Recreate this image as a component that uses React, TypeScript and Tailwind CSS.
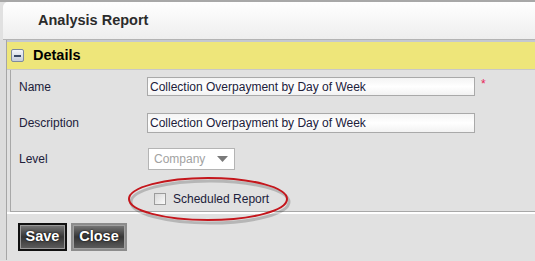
export default function App() {
  const font = { fontFamily: '"Liberation Sans", Arial, sans-serif' };
  return (
    <div
      className="relative w-[535px] h-[261px] overflow-hidden bg-[#e1e1e1] border-t-2 border-[#a8a8a8]"
      style={font}
    >
      {/* Window header */}
      <div className="ml-[3px] h-[38px] rounded-tl-[5px] bg-gradient-to-b from-white to-[#eeeeee] border-b border-[#b4b4b4] flex items-center pl-[35px]">
        <span className="text-[14.5px] font-bold text-[#2b2b2b]">Analysis Report</span>
      </div>

      {/* Body */}
      <div className="flex h-[220px]">
        <div className="w-[7px] bg-[#dcdcdc] border-r border-[#a6a6a6]" />
        <div className="flex-1 flex flex-col border-t-2 border-[#c4c8d0]">
          {/* Section bar */}
          <div className="h-[28px] bg-[#eee67a] border-b border-[#c8c8c8] flex items-center pl-[4px]">
            <div className="w-[13px] h-[13px] rounded-[2px] border border-[#7d8aa0] bg-gradient-to-b from-[#f4f6fa] to-[#c6cedb] flex items-center justify-center">
              <div className="w-[7px] h-[2px] bg-[#3a4a66]" />
            </div>
            <span className="ml-[9px] text-[14.5px] font-bold text-black">Details</span>
          </div>

          {/* Form */}
          <div className="flex">
            <div className="w-[3px]" />
            <div className="flex-1 h-[142px] border-l border-b border-[#a8a8a8] pl-[8px] pt-[7px] text-[12px] text-[#20203a]">
              <div className="flex items-center h-[19px]">
                <span className="w-[128px]">Name</span>
                <div className="w-[328px] h-[19px] border border-[#a9a9a9] bg-gradient-to-b from-[#f4f4f4] via-white to-[#f2f2f2] flex items-center pl-[2px]">
                  Collection Overpayment by Day of Week
                </div>
                <span className="ml-[6px] -mt-[6px] text-[#e8245a] text-[12px]">*</span>
              </div>
              <div className="flex items-center h-[20px] mt-[17px]">
                <span className="w-[128px]">Description</span>
                <div className="w-[328px] h-[20px] border border-[#a9a9a9] bg-gradient-to-b from-[#f4f4f4] via-white to-[#f2f2f2] flex items-center pl-[2px]">
                  Collection Overpayment by Day of Week
                </div>
              </div>
              <div className="flex items-center h-[22px] mt-[15px]">
                <span className="w-[129px]">Level</span>
                <div className="w-[87px] h-[22px] border border-[#b4b4b4] bg-white flex items-center pl-[5px] text-[#a2a2a2]">
                  <span>Company</span>
                  <svg width="11" height="6" viewBox="0 0 11 6" className="ml-[12px]">
                    <path d="M0 0 H11 L5.5 6 Z" fill="#7a7a7a" />
                  </svg>
                </div>
              </div>
              <div className="flex items-center h-[13px] mt-[22px] pl-[135px]">
                <div className="w-[12px] h-[12px] border border-[#9c9c9c] bg-gradient-to-br from-[#d8d8d8] to-[#fbfbfb]" />
                <span className="ml-[7px]">Scheduled Report</span>
              </div>
            </div>
          </div>

          {/* Footer */}
          <div className="flex-1 border-t-2 border-white flex items-start pt-[9px] pl-[11px] gap-[4px]">
            <div className="h-[28px] w-[49px] border-2 border-[#111] bg-gradient-to-b from-[#7a7a7a] via-[#353535] to-[#5e5e5e] shadow-[inset_0_0_0_1px_#9a9a9a] flex items-center justify-center text-white font-bold text-[14.5px] [text-shadow:0_0_2px_#000]">
              Save
            </div>
            <div className="h-[28px] w-[56px] border-2 border-[#8c8c8c] bg-gradient-to-b from-[#7a7a7a] via-[#353535] to-[#5e5e5e] shadow-[inset_0_0_0_1px_#a0a0a0] flex items-center justify-center text-white font-bold text-[14.5px] [text-shadow:0_0_2px_#000]">
              Close
            </div>
          </div>
        </div>
      </div>

      {/* Highlight ellipse */}
      <svg className="absolute left-[126px] top-[172px]" width="166" height="52" viewBox="0 0 166 52">
        <ellipse cx="84" cy="28" rx="79" ry="21" fill="none" stroke="#00000030" strokeWidth="3" />
        <ellipse cx="82" cy="25" rx="79" ry="21" fill="none" stroke="#c4161c" strokeWidth="2" />
      </svg>
    </div>
  );
}
